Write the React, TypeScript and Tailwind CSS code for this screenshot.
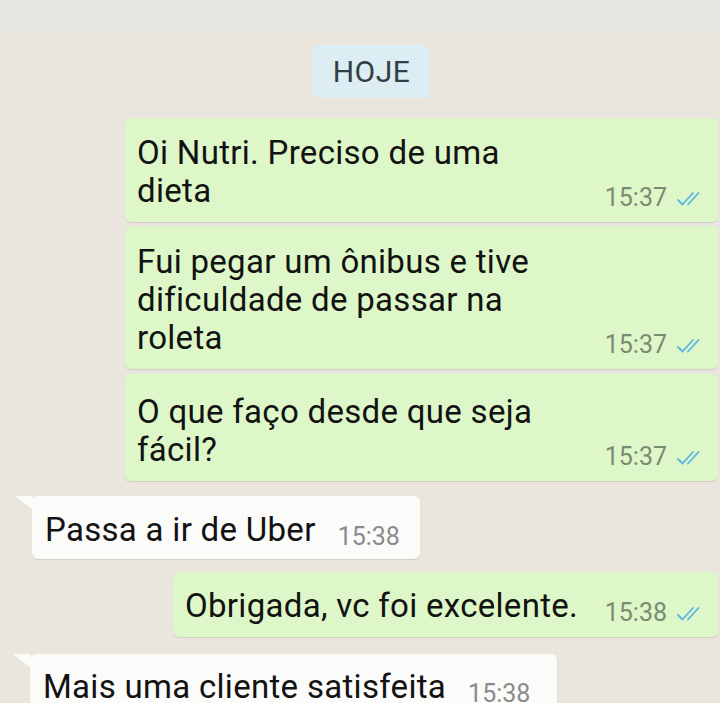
import React from "react";

const font = { fontFamily: "Roboto, 'Liberation Sans', sans-serif" };

function Ticks() {
  return (
    <svg width="30" height="16" viewBox="0 0 30 16" fill="none" className="ml-[9px] mb-[3px] shrink-0">
      <path d="M2 9 L6.5 13.5 L17 2" stroke="#5ab6e0" strokeWidth="1.8" strokeLinecap="round" strokeLinejoin="round" />
      <path d="M12 13.5 L22.5 2" stroke="#5ab6e0" strokeWidth="1.8" strokeLinecap="round" />
    </svg>
  );
}

function Out({
  lines,
  time,
  className,
}: {
  lines: string[];
  time: string;
  className: string;
}) {
  return (
    <div
      className={
        "flex shrink-0 items-end justify-between rounded-[6px] bg-[#ddf7c8] pl-[12px] pr-[12px] shadow-[0_1px_1px_rgba(0,0,0,0.12)] " +
        className
      }
    >
      <div className="whitespace-nowrap text-[33px] leading-[38px] tracking-[0.3px] text-[#121212]">
        {lines.map((l, i) => (
          <div key={i}>{l}</div>
        ))}
      </div>
      <div className="flex items-end">
        <span className="text-[25px] leading-none text-[#7b8a73]">{time}</span>
        <Ticks />
      </div>
    </div>
  );
}

function In({ text, time, className }: { text: string; time: string; className: string }) {
  return (
    <div
      className={
        "relative flex shrink-0 items-end rounded-[6px] bg-[#fbfbf9] pl-[13px] pr-[15px] shadow-[0_1px_1px_rgba(0,0,0,0.12)] " +
        className
      }
    >
      <div className="absolute left-[-17px] top-0 h-0 w-0 border-l-[18px] border-t-[14px] border-l-transparent border-t-[#fbfbf9]" />
      <div className="whitespace-nowrap text-[33px] leading-[38px] tracking-[0.3px] text-[#121212]">{text}</div>
      <span className="text-[25px] leading-none text-[#8b8b8b]">{time}</span>
    </div>
  );
}

export default function App() {
  return (
    <div className="flex h-[720px] w-[720px] flex-col overflow-hidden bg-[#ebe6dd]" style={font}>
      <div className="h-[35px] shrink-0 bg-[#e7e6e2]" />
      <div className="flex h-[668px] shrink-0 flex-col overflow-hidden pt-[10px]">
        <div className="ml-[313px] flex h-[53px] w-[117px] shrink-0 items-center justify-center rounded-[6px] bg-[#dcedf3] text-[30px] tracking-[0.5px] text-[#323f45]">
          HOJE
        </div>
        <Out
          className="ml-[125px] mt-[20px] w-[593px] pt-[16px] pb-[12px]"
          lines={["Oi Nutri. Preciso de uma", "dieta"]}
          time="15:37"
        />
        <Out
          className="ml-[125px] mt-[4px] w-[593px] pt-[17px] pb-[12px]"
          lines={["Fui pegar um ônibus e tive", "dificuldade de passar na", "roleta"]}
          time="15:37"
        />
        <Out
          className="ml-[125px] mt-[5px] w-[593px] pt-[19px] pb-[12px]"
          lines={["O que faço desde que seja", "fácil?"]}
          time="15:37"
        />
        <In
          className="ml-[32px] mt-[15px] w-[388px] gap-[22px] pt-[15px] pb-[10px]"
          text="Passa a ir de Uber"
          time="15:38"
        />
        <Out
          className="ml-[173px] mt-[13px] w-[545px] pt-[15px] pb-[12px]"
          lines={["Obrigada, vc foi excelente."]}
          time="15:38"
        />
        <In
          className="ml-[30px] mt-[17px] w-[527px] gap-[22px] pt-[14px] pb-[10px]"
          text="Mais uma cliente satisfeita"
          time="15:38"
        />
      </div>
      <div className="flex-1 bg-white" />
    </div>
  );
}
